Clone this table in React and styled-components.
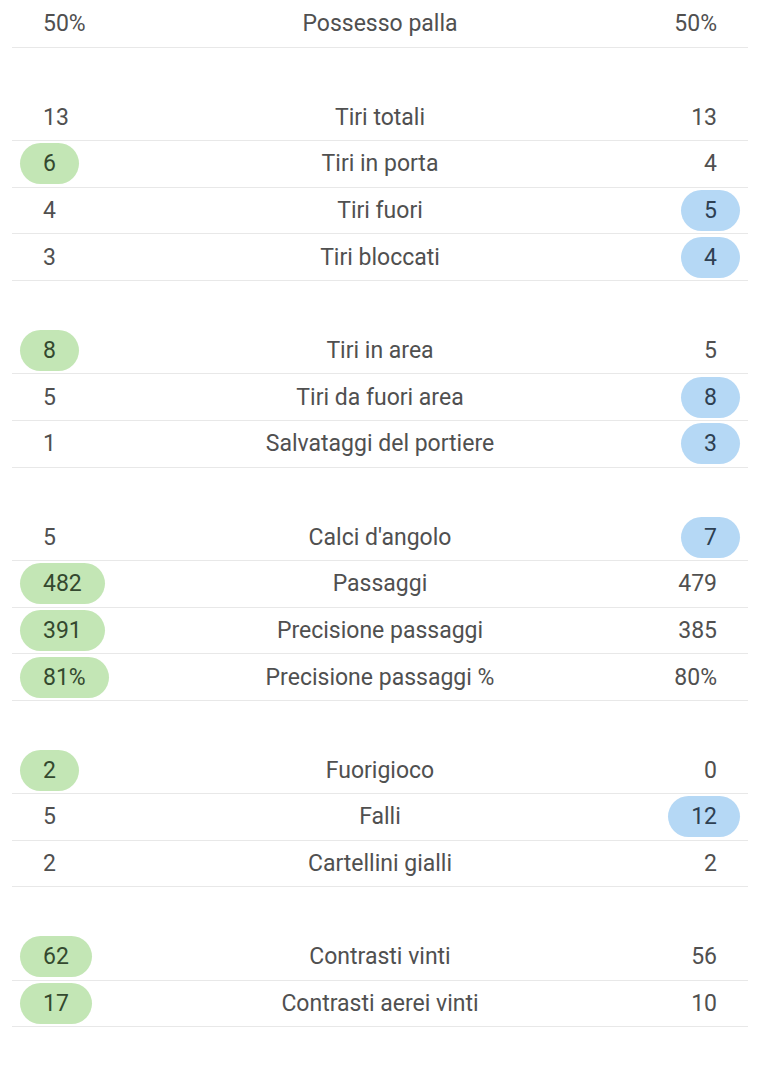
import React from "react";
import styled, { createGlobalStyle, css } from "styled-components";

const GlobalStyle = createGlobalStyle`
  html, body {
    margin: 0;
    padding: 0;
    background: #ffffff;
  }
  body {
    font-family: Roboto, "Noto Sans", "Liberation Sans", sans-serif;
  }
`;

const ROW_H = 46.67;

const StatsTable = styled.div`
  width: 736px;
  margin-left: 12px;
  padding-top: 1px;
  display: flex;
  flex-direction: column;
  gap: ${ROW_H}px;
`;

const Group = styled.div`
  display: flex;
  flex-direction: column;
`;

const Row = styled.div`
  box-sizing: border-box;
  height: ${ROW_H}px;
  display: grid;
  grid-template-columns: 1fr auto 1fr;
  align-items: center;
  border-bottom: 1px solid #e8e8e8;
  font-size: 23px;
  color: #505050;
`;

const Label = styled.div`
  text-align: center;
  white-space: nowrap;
`;

const Cell = styled.div`
  display: flex;
  justify-content: ${(p) => (p.$side === "right" ? "flex-end" : "flex-start")};
  padding: ${(p) => (p.$side === "right" ? "0 8px 0 0" : "0 0 0 8px")};
`;

const Value = styled.span`
  box-sizing: border-box;
  height: 41px;
  line-height: 41px;
  padding: 0 23px;
  border-radius: 21px;
  ${(p) =>
    p.$win === "home" &&
    css`
      background: #c3e6b5;
      color: #34492f;
    `}
  ${(p) =>
    p.$win === "away" &&
    css`
      background: #b5d8f5;
      color: #2e4052;
    `}
`;

const groups = [
  [["50%", "Possesso palla", "50%"]],
  [
    ["13", "Tiri totali", "13"],
    ["6", "Tiri in porta", "4"],
    ["4", "Tiri fuori", "5"],
    ["3", "Tiri bloccati", "4"],
  ],
  [
    ["8", "Tiri in area", "5"],
    ["5", "Tiri da fuori area", "8"],
    ["1", "Salvataggi del portiere", "3"],
  ],
  [
    ["5", "Calci d'angolo", "7"],
    ["482", "Passaggi", "479"],
    ["391", "Precisione passaggi", "385"],
    ["81%", "Precisione passaggi %", "80%"],
  ],
  [
    ["2", "Fuorigioco", "0"],
    ["5", "Falli", "12"],
    ["2", "Cartellini gialli", "2"],
  ],
  [
    ["62", "Contrasti vinti", "56"],
    ["17", "Contrasti aerei vinti", "10"],
  ],
];

const num = (v) => parseFloat(v);

function StatRow({ home, label, away }) {
  const h = num(home);
  const a = num(away);
  return (
    <Row>
      <Cell $side="left">
        <Value $win={h > a ? "home" : null}>{home}</Value>
      </Cell>
      <Label>{label}</Label>
      <Cell $side="right">
        <Value $win={a > h ? "away" : null}>{away}</Value>
      </Cell>
    </Row>
  );
}

export default function App() {
  return (
    <>
      <GlobalStyle />
      <StatsTable>
        {groups.map((rows, gi) => (
          <Group key={gi}>
            {rows.map(([home, label, away]) => (
              <StatRow key={label} home={home} label={label} away={away} />
            ))}
          </Group>
        ))}
      </StatsTable>
    </>
  );
}
